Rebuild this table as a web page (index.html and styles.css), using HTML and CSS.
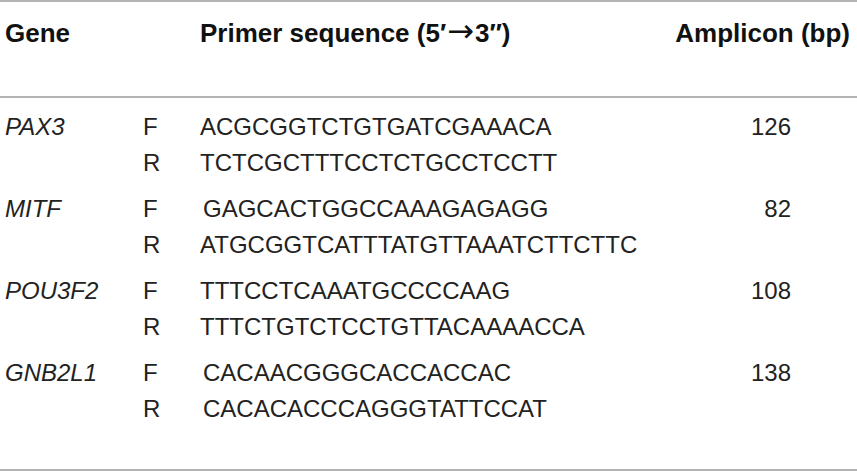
FILE: index.html
```html
<!DOCTYPE html>
<html>
<head>
<meta charset="utf-8">
<link rel="stylesheet" href="styles.css">
</head>
<body>
<div class="table">
  <div class="head">
    <div class="h-gene">Gene</div>
    <div class="h-seq">Primer sequence (5′<span class="arr">→</span>3″)</div>
    <div class="h-amp">Amplicon (bp)</div>
  </div>
  <div class="groups">
    <div class="group">
      <div class="gene">PAX3</div><div class="strand">F</div><div class="seq">ACGCGGTCTGTGATCGAAACA</div><div class="amp">126</div>
      <div class="gene"></div><div class="strand">R</div><div class="seq">TCTCGCTTTCCTCTGCCTCCTT</div><div class="amp"></div>
    </div>
    <div class="group">
      <div class="gene">MITF</div><div class="strand">F</div><div class="seq ind">GAGCACTGGCCAAAGAGAGG</div><div class="amp">82</div>
      <div class="gene"></div><div class="strand">R</div><div class="seq">ATGCGGTCATTTATGTTAAATCTTCTTC</div><div class="amp"></div>
    </div>
    <div class="group">
      <div class="gene">POU3F2</div><div class="strand">F</div><div class="seq">TTTCCTCAAATGCCCCAAG</div><div class="amp">108</div>
      <div class="gene"></div><div class="strand">R</div><div class="seq">TTTCTGTCTCCTGTTACAAAACCA</div><div class="amp"></div>
    </div>
    <div class="group">
      <div class="gene">GNB2L1</div><div class="strand">F</div><div class="seq ind">CACAACGGGCACCACCAC</div><div class="amp">138</div>
      <div class="gene"></div><div class="strand">R</div><div class="seq ind">CACACACCCAGGGTATTCCAT</div><div class="amp"></div>
    </div>
  </div>
</div>
</body>
</html>
```

FILE: styles.css
```css
* { box-sizing: border-box; }
html, body { margin: 0; padding: 0; background: #fff; }
body {
  width: 857px;
  height: 473px;
  font-family: "Liberation Sans", Arial, Helvetica, sans-serif;
  color: #222;
}
.table {
  border-top: 2px solid #b4b4b4;
  border-bottom: 2px solid #b4b4b4;
}
.head {
  display: grid;
  grid-template-columns: 195px 1fr auto;
  padding: 16px 7px 48px 5px;
  border-bottom: 2px solid #b4b4b4;
  font-weight: bold;
  font-size: 26px;
  line-height: 30px;
  color: #111;
}
.arr {
  font-family: "DejaVu Sans", sans-serif;
  font-weight: normal;
  font-size: 32px;
  line-height: 0;
  margin: 0 1px;
  vertical-align: 0;
}
.h-amp { text-align: right; }
.groups {
  display: flex;
  flex-direction: column;
  gap: 10px;
  padding: 11px 0 42px 0;
}
.group {
  display: grid;
  grid-template-columns: 138px 57px 1fr 120px;
  grid-auto-rows: 36px;
  align-items: center;
  font-size: 24px;
  line-height: 36px;
  padding-left: 5px;
  padding-right: 66px;
}
.gene { font-style: italic; }
.seq.ind { padding-left: 3px; }
.amp { text-align: right; }
```
